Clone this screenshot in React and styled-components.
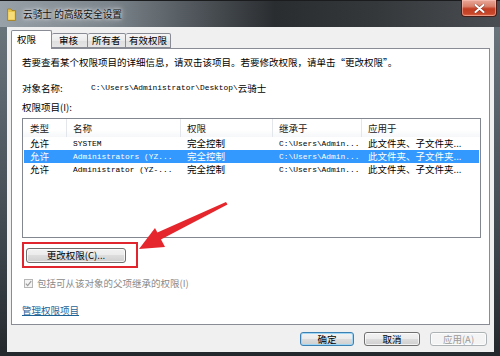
import React from 'react'
import styled, { createGlobalStyle } from 'styled-components'

const GlobalStyle = createGlobalStyle`
  html, body {
    margin: 0;
    padding: 0;
    background: #1f2327;
  }
  body {
    font-family: "Noto Sans CJK SC", "Noto Sans", sans-serif;
    color: #000;
  }
`

const CJK = `"Noto Sans CJK SC", "Noto Sans", sans-serif`
const MONO = `"Liberation Mono", "Noto Sans CJK SC", monospace`

const Window = styled.div`
  position: relative;
  width: 500px;
  height: 356px;
  overflow: hidden;
  display: flex;
  flex-direction: column;
  background: linear-gradient(180deg, #6f7980 0%, #59636b 30%, #3d454c 70%, #23282c 100%);
`

const TitleBar = styled.div`
  height: 27px;
  flex: none;
  display: flex;
  align-items: center;
  padding-left: 7px;
  gap: 7px;
  border-top: 1px solid #1a1c1e;
  box-sizing: border-box;
  background: linear-gradient(90deg, #98a1a8 0%, #7c858c 22%, #4d5358 40%, #2a2d30 55%, #34383b 75%, #4a4e52 100%);
`

const Title = styled.span`
  font-family: ${CJK};
  font-size: 9.7px;
  color: #111;
  text-shadow: 0 0 6px rgba(255, 255, 255, 0.9), 0 0 3px rgba(255, 255, 255, 0.8);
  margin-top: -1px;
`

const CloseButton = styled.div`
  position: absolute;
  top: 0;
  right: 3px;
  width: 36px;
  height: 17px;
  box-sizing: border-box;
  border: 1px solid #4a1e16;
  border-top: none;
  border-radius: 0 0 4px 4px;
  background: linear-gradient(180deg, #e9a899 0%, #d8806a 40%, #c23d22 55%, #c8472b 85%, #e0704f 100%);
  display: flex;
  align-items: center;
  justify-content: center;
  box-shadow: inset 0 0 0 1px rgba(255, 200, 190, 0.5);
`

const Client = styled.div`
  height: 325px;
  flex: none;
  margin: 0 6px 0 7px;
  background: #f0f0f0;
  box-sizing: border-box;
  padding: 3px 4px 0 4px;
  display: flex;
  flex-direction: column;
`

const TabStrip = styled.div`
  height: 18px;
  display: flex;
  align-items: flex-end;
  position: relative;
  z-index: 1;
`

const Tab = styled.div`
  width: ${p => p.$w}px;
  height: ${p => (p.$active ? 19 : 15)}px;
  margin-bottom: ${p => (p.$active ? -1 : 0)}px;
  box-sizing: border-box;
  border: 1px solid #898c95;
  border-bottom: ${p => (p.$active ? 'none' : '1px solid #898c95')};
  border-left: ${p => (p.$first || p.$active ? '1px solid #898c95' : 'none')};
  border-radius: 2px 2px 0 0;
  background: ${p => (p.$active ? '#fff' : 'linear-gradient(180deg, #f5f5f5 0%, #ebebeb 50%, #dedede 51%, #e6e6e6 100%)')};
  font-family: ${CJK};
  font-size: 9.5px;
  line-height: ${p => (p.$active ? 16 : 13)}px;
  padding-left: ${p => p.$pad}px;
  white-space: nowrap;
`

const Panel = styled.div`
  height: 277px;
  box-sizing: border-box;
  border: 1px solid #898c95;
  background: #fff;
  padding: 7px 0 0 10px;
  display: flex;
  flex-direction: column;
`

const Line = styled.div`
  height: 12px;
  line-height: 12px;
  margin-top: ${p => p.$mt || 0}px;
  font-family: ${CJK};
  font-size: 9.5px;
  white-space: nowrap;
  display: flex;
  align-items: center;
  color: ${p => (p.$muted ? '#8a8a8a' : '#000')};
`

const Label = styled.span`
  width: 69px;
  flex: none;
`

const Mono = styled.span`
  font-family: ${MONO};
  font-size: 7.9px;
`

const List = styled.div`
  width: 459px;
  height: 120px;
  margin-top: 5px;
  box-sizing: border-box;
  border: 1px solid #828790;
  background: #fff;
`

const Cols = `44px 114px 92px 89px 1fr`

const HeaderRow = styled.div`
  display: grid;
  grid-template-columns: ${Cols};
  height: 18px;
  align-items: center;
  background: linear-gradient(180deg, #fff 0%, #fff 60%, #f5f7f9 100%);
`

const HeaderCell = styled.div`
  height: 18px;
  line-height: 18px;
  padding-left: ${p => p.$pad || 6}px;
  font-family: ${CJK};
  font-size: 9.5px;
  color: #1a1a1a;
  border-right: 1px solid #e3e6ea;
  white-space: nowrap;
  overflow: hidden;
`

const Row = styled.div`
  display: grid;
  grid-template-columns: ${Cols};
  height: 13px;
  align-items: center;
  margin: 0 1px;
  background: ${p => (p.$sel ? '#3399ff' : 'transparent')};
  color: ${p => (p.$sel ? '#fff' : '#000')};
`

const Cell = styled.div`
  padding-left: ${p => p.$pad || 5}px;
  font-family: ${p => (p.$mono ? MONO : CJK)};
  font-size: ${p => (p.$mono ? '7.9px' : '9.5px')};
  line-height: 13px;
  white-space: nowrap;
  overflow: hidden;
`

const Highlight = styled.div`
  width: 116px;
  height: 26px;
  margin-top: 4px;
  box-sizing: border-box;
  border: 2px solid #e0252f;
  padding: 4px 0 0 2px;
`

const Button = styled.div`
  width: ${p => p.$w}px;
  height: ${p => p.$h}px;
  box-sizing: border-box;
  border: 1px solid ${p => (p.$default ? '#3c7fb1' : p.$disabled ? '#adb2b5' : '#707070')};
  border-radius: 3px;
  background: ${p =>
    p.$disabled
      ? '#f4f4f4'
      : 'linear-gradient(180deg, #f2f2f2 0%, #ebebeb 49%, #dddddd 50%, #cfcfcf 100%)'};
  box-shadow: ${p => (p.$default ? 'inset 0 0 0 1px #9fd5f5' : 'inset 0 0 0 1px rgba(255,255,255,0.7)')};
  font-family: ${CJK};
  font-size: 9.5px;
  line-height: ${p => p.$h - 2}px;
  text-align: center;
  color: ${p => (p.$disabled ? '#9a9a9a' : '#000')};
  white-space: nowrap;
`

const CheckBox = styled.span`
  width: 9px;
  height: 9px;
  box-sizing: border-box;
  border: 1px solid #b6b6b6;
  background: #f4f4f4;
  margin: 0 4px 0 2px;
  display: inline-flex;
  align-items: center;
  justify-content: center;
`

const Link = styled.span`
  font-family: ${CJK};
  font-size: 9.5px;
  color: #1d6297;
  text-decoration: underline;
`

const Footer = styled.div`
  display: flex;
  justify-content: flex-end;
  gap: 10px;
  padding: 7px 3px 0 0;
`

const BottomFrame = styled.div`
  flex: 1;
`

const Arrow = styled.svg`
  position: absolute;
  left: 0;
  top: 0;
  pointer-events: none;
`

const FolderIcon = () => (
  <svg width="9" height="13" viewBox="0 0 9 13">
    <path d="M0.5 1 L4 1 L5 2.5 L8.5 2.5 L8.5 12.5 L0.5 12.5 Z" fill="#e9c44a" stroke="#a37d1c" strokeWidth="0.8" />
    <path d="M1.5 4 L7.5 4 L7.5 11.5 L1.5 11.5 Z" fill="#f7dc7a" />
  </svg>
)

const rows = [
  { type: '允许', name: 'SYSTEM', perm: '完全控制', from: 'C:\\Users\\Admin...', to: '此文件夹、子文件夹...' },
  { type: '允许', name: 'Administrators (YZ...', perm: '完全控制', from: 'C:\\Users\\Admin...', to: '此文件夹、子文件夹...', sel: true },
  { type: '允许', name: 'Administrator (YZ-...', perm: '完全控制', from: 'C:\\Users\\Admin...', to: '此文件夹、子文件夹...' },
]

export default function App() {
  return (
    <>
      <GlobalStyle />
      <Window>
        <TitleBar>
          <FolderIcon />
          <Title>云骑士 的高级安全设置</Title>
        </TitleBar>
        <CloseButton>
          <svg width="11" height="9" viewBox="0 0 11 9">
            <path d="M1.5 1 L9.5 8 M9.5 1 L1.5 8" stroke="#5a1a10" strokeWidth="3.2" strokeLinecap="round" opacity="0.5" />
            <path d="M1.5 1 L9.5 8 M9.5 1 L1.5 8" stroke="#fff" strokeWidth="2" strokeLinecap="round" />
          </svg>
        </CloseButton>

        <Client>
          <TabStrip>
            <Tab $w={41} $pad={5} $active $first>权限</Tab>
            <Tab $w={36} $pad={7}>审核</Tab>
            <Tab $w={38} $pad={4}>所有者</Tab>
            <Tab $w={45} $pad={3}>有效权限</Tab>
          </TabStrip>

          <Panel>
            <Line>若要查看某个权限项目的详细信息，请双击该项目。若要修改权限，请单击“更改权限”。</Line>
            <Line $mt={14}>
              <Label>对象名称:</Label>
              <Mono>C:\Users\Administrator\Desktop\</Mono>云骑士
            </Line>
            <Line $mt={7}>权限项目(I):</Line>

            <List>
              <HeaderRow>
                <HeaderCell $pad={7}>类型</HeaderCell>
                <HeaderCell>名称</HeaderCell>
                <HeaderCell>权限</HeaderCell>
                <HeaderCell>继承于</HeaderCell>
                <HeaderCell style={{ borderRight: 'none' }}>应用于</HeaderCell>
              </HeaderRow>
              {rows.map((r, i) => (
                <Row key={i} $sel={r.sel}>
                  <Cell $pad={6}>{r.type}</Cell>
                  <Cell $mono>{r.name}</Cell>
                  <Cell>{r.perm}</Cell>
                  <Cell $mono>{r.from}</Cell>
                  <Cell>{r.to}</Cell>
                </Row>
              ))}
            </List>

            <Highlight>
              <Button $w={100} $h={15}>更改权限(C)...</Button>
            </Highlight>

            <Line $mt={9} $muted>
              <CheckBox>
                <svg width="7" height="7" viewBox="0 0 7 7">
                  <path d="M0.8 3.6 L2.7 5.6 L6.2 1.2" fill="none" stroke="#9a9a9a" strokeWidth="1.2" />
                </svg>
              </CheckBox>
              包括可从该对象的父项继承的权限(I)
            </Line>

            <Line $mt={15}>
              <Link>管理权限项目</Link>
            </Line>
          </Panel>

          <Footer>
            <Button $w={54} $h={14} $default>确定</Button>
            <Button $w={56} $h={14}>取消</Button>
            <Button $w={57} $h={14} $disabled>应用(A)</Button>
          </Footer>
        </Client>
        <BottomFrame />

        <Arrow width="500" height="356" viewBox="0 0 500 356">
          <polygon points="226,202 227.5,204.5 158,241 154,234" fill="#e5262c" />
          <polygon points="139,249 155,228 165,247" fill="#e5262c" />
        </Arrow>
      </Window>
    </>
  )
}
